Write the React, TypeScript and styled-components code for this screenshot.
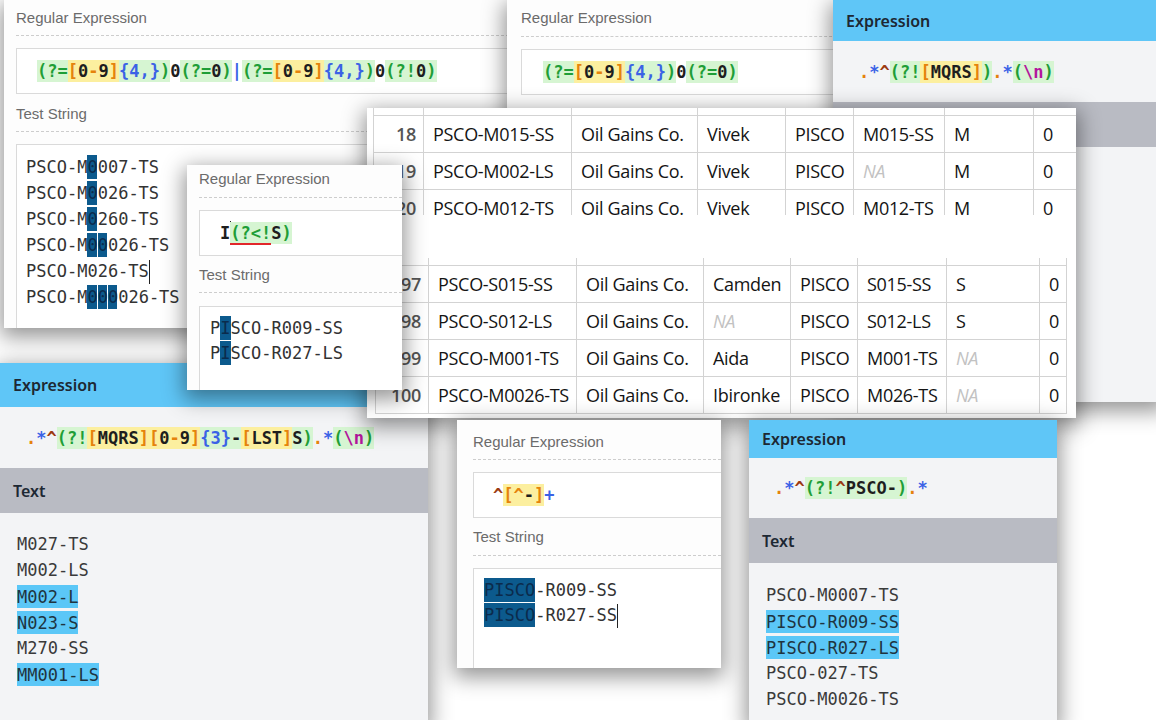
import React from 'react'
import styled, {createGlobalStyle} from 'styled-components'

const MONO = `"DejaVu Sans Mono", "Liberation Mono", monospace`

const GlobalStyle = createGlobalStyle`
  html, body {
    margin: 0;
    padding: 0;
    background: #fff;
  }
`

const Desk = styled.main`
  position: relative;
  width: 1156px;
  height: 720px;
  overflow: hidden;
  background: #fff;
`

// every screenshot is a cropped window lying on the desk
const Shot = styled.section<{ $x: number, $y: number, $w: number, $h: number, $z: number }>`
  position: absolute;
  left: ${p => p.$x}px;
  top: ${p => p.$y}px;
  width: ${p => p.$w}px;
  height: ${p => p.$h}px;
  z-index: ${p => p.$z};
  box-sizing: border-box;
  overflow: hidden;
  box-shadow: 0 6px 20px 3px rgba(0, 0, 0, .42);
`

/* ---------- regex tokens ---------- */

type Kind = 'grp' | 'br' | 'q' | 'dot' | 'caret' | 'esc' | 'lit'

const tokenColor: Record<Kind, string> = {
  grp: '#1f9e37',
  br: '#e5830c',
  q: '#3a62e6',
  dot: '#e5830c',
  caret: '#9c3b12',
  esc: '#b3179c',
  lit: '#1e1e1e',
}

const Tk = styled.span<{ $k: Kind }>`
  color: ${p => tokenColor[p.$k]};
`

const GroupBg = styled.span`
  background: #d6f5d2;
  padding: 1px 0;
`

const ClassBg = styled.span`
  background: #fcef9f;
  padding: 1px 0;
`

const Warn = styled.span`
  border-bottom: 2px solid #e2262a;
`

const Cursor = styled.span`
  display: inline-block;
  width: 1px;
  height: 24px;
  margin-right: -1px;
  background: #222;
  vertical-align: middle;
`

const Grp = ({open, children}: { open: React.ReactNode, children?: React.ReactNode }) => (
  <GroupBg><Tk $k="grp">{open}</Tk>{children}<Tk $k="grp">)</Tk></GroupBg>
)

const Cls = ({children}: { children?: React.ReactNode }) => (
  <ClassBg><Tk $k="br">[</Tk>{children}<Tk $k="br">]</Tk></ClassBg>
)

const Digits = () => <Cls>0<Tk $k="br">-</Tk>9</Cls>
const DotStar = () => <><Tk $k="dot">.</Tk><Tk $k="q">*</Tk></>

/* ---------- regex tester windows ---------- */

const Tester = styled(Shot)<{ $pad: number }>`
  background: #fdfdfd;
  padding-left: ${p => p.$pad}px;
  display: flex;
  flex-direction: column;
`

const FieldLabel = styled.div<{ $pt: number, $h: number }>`
  flex: none;
  box-sizing: border-box;
  height: ${p => p.$h}px;
  padding-top: ${p => p.$pt}px;
  font: 15px/20px "Liberation Sans", Arial, sans-serif;
  color: #6b6b6b;
  border-bottom: 1px dashed #cdcdcd;
`

const RegexBox = styled.div<{ $mt: number, $pl: number }>`
  flex: none;
  box-sizing: border-box;
  height: 46px;
  margin-top: ${p => p.$mt}px;
  margin-right: -4px;
  padding-left: ${p => p.$pl}px;
  display: flex;
  align-items: center;
  border: 1px solid #dadada;
  background: #fff;
  font: bold 17px ${MONO};
  color: #1e1e1e;
  white-space: pre;
`

const TestBox = styled.div<{ $mt: number, $pt: number, $pl: number, $lh: number }>`
  flex: 1;
  margin: ${p => p.$mt}px -4px -4px 0;
  padding: ${p => p.$pt}px 0 0 ${p => p.$pl}px;
  border: 1px solid #dadada;
  background: #fff;
  font: 17px/${p => p.$lh}px ${MONO};
  color: #333;
  white-space: pre;
`

const Sel = styled.span<{ $gap?: boolean }>`
  background: linear-gradient(to right, #0c5a8d calc(100% - ${p => p.$gap ? 1 : 0}px), transparent 0);
  color: #0b2b4c;
  padding: 2px 0;
`

/* ---------- expression windows ---------- */

const ExprShot = styled(Shot)`
  background: #f3f4f6;
  display: flex;
  flex-direction: column;
`

const Bar = styled.header<{ $tone: 'blue' | 'gray', $h: number }>`
  flex: none;
  height: ${p => p.$h}px;
  padding-left: 13px;
  display: flex;
  align-items: center;
  background: ${p => p.$tone === 'blue' ? '#5fc6f7' : '#b9bbc3'};
  font: 600 16px "Noto Sans", "Open Sans", sans-serif;
  color: #1d2833;
`

const ExprLine = styled.div<{ $h: number, $pl: number }>`
  flex: none;
  height: ${p => p.$h}px;
  padding-left: ${p => p.$pl}px;
  display: flex;
  align-items: center;
  font: bold 17px ${MONO};
  color: #1e1e1e;
  white-space: pre;
`

const TextBody = styled.div<{ $pt: number }>`
  padding: ${p => p.$pt}px 0 0 17px;
  font: 17px/26px ${MONO};
  color: #3a3a3a;
  white-space: pre;
`

const Hit = styled.span`
  background: #5bc7f7;
  color: #1f3440;
  padding: 1.5px 0;
`

/* ---------- spreadsheet window ---------- */

const Sheet = styled(Shot)`
  background: #fff;
`

const Clip = styled.div<{ $h: number, $ml: number, $mt: number }>`
  height: ${p => p.$h}px;
  margin: ${p => p.$mt}px 0 0 ${p => p.$ml}px;
  overflow: hidden;
`

const Grid = styled.table<{ $w: number }>`
  width: ${p => p.$w}px;
  margin-top: -30px;
  border-collapse: collapse;
  table-layout: fixed;
  font: 18px "Open Sans", "Noto Sans", sans-serif;
  letter-spacing: -0.3px;
  color: #141414;
`

const Col = styled.col<{ $w: number }>`
  width: ${p => p.$w}px;
`

const Cell = styled.td<{ $kind: 'num' | 'na' | 'text' }>`
  height: 37px;
  box-sizing: border-box;
  padding: 0 ${p => p.$kind === 'num' ? 7 : 0}px 0 ${p => p.$kind === 'num' ? 0 : 9}px;
  border: 1px solid #d3d3d3;
  white-space: nowrap;
  overflow: hidden;
  text-align: ${p => p.$kind === 'num' ? 'right' : 'left'};
  color: ${p => p.$kind === 'num' ? '#555' : p.$kind === 'na' ? '#c2c2c2' : '#141414'};
  font-weight: ${p => p.$kind === 'num' ? 600 : 400};
  font-style: ${p => p.$kind === 'na' ? 'italic' : 'normal'};
`

type Row = string[]

// the first row of each block lies above the crop; only its grid lines show
const topRows: Row[] = [
  ['', '', '', '', '', '', '', ''],
  ['18', 'PSCO-M015-SS', 'Oil Gains Co.', 'Vivek', 'PISCO', 'M015-SS', 'M', '0'],
  ['19', 'PSCO-M002-LS', 'Oil Gains Co.', 'Vivek', 'PISCO', 'NA', 'M', '0'],
  ['20', 'PSCO-M012-TS', 'Oil Gains Co.', 'Vivek', 'PISCO', 'M012-TS', 'M', '0'],
]

const bottomRows: Row[] = [
  ['', '', '', '', '', '', '', ''],
  ['97', 'PSCO-S015-SS', 'Oil Gains Co.', 'Camden', 'PISCO', 'S015-SS', 'S', '0'],
  ['98', 'PSCO-S012-LS', 'Oil Gains Co.', 'NA', 'PISCO', 'S012-LS', 'S', '0'],
  ['99', 'PSCO-M001-TS', 'Oil Gains Co.', 'Aida', 'PISCO', 'M001-TS', 'NA', '0'],
  ['100', 'PSCO-M0026-TS', 'Oil Gains Co.', 'Ibironke', 'PISCO', 'M026-TS', 'NA', '0'],
]

const DataGrid = ({rows, cols}: { rows: Row[], cols: number[] }) => (
  <Grid $w={cols.reduce((a, b) => a + b, 0)}>
    <colgroup>
      {cols.map((w, i) => <Col key={i} $w={w}/>)}
    </colgroup>
    <tbody>
    {rows.map((row, r) => (
      <tr key={r}>
        {row.map((v, i) => (
          <Cell key={i} $kind={i === 0 ? 'num' : v === 'NA' ? 'na' : 'text'}>{v}</Cell>
        ))}
      </tr>
    ))}
    </tbody>
  </Grid>
)

/* ---------- page ---------- */

export default function App() {
  return (
    <Desk>
      <GlobalStyle/>

      {/* top left tester */}
      <Tester $x={4} $y={0} $w={520} $h={328} $z={1} $pad={12}>
        <FieldLabel $pt={8} $h={36}>Regular Expression</FieldLabel>
        <RegexBox $mt={12} $pl={20}>
          <Grp open="(?="><Digits/><Tk $k="q">{'{4,}'}</Tk></Grp>0<Grp open="(?=">0</Grp>
          <Tk $k="q">|</Tk>
          <Grp open="(?="><Digits/><Tk $k="q">{'{4,}'}</Tk></Grp>0<Grp open="(?!">0</Grp>
        </RegexBox>
        <FieldLabel $pt={10} $h={38}>Test String</FieldLabel>
        <TestBox $mt={12} $pt={9} $pl={9} $lh={26}>
          <div>PSCO-M<Sel $gap>0</Sel>007-TS</div>
          <div>PSCO-M<Sel $gap>0</Sel>026-TS</div>
          <div>PSCO-M<Sel $gap>0</Sel>260-TS</div>
          <div>PSCO-M<Sel $gap>0</Sel><Sel $gap>0</Sel>026-TS</div>
          <div>PSCO-M026-TS<Cursor/></div>
          <div>PSCO-M<Sel $gap>0</Sel><Sel $gap>0</Sel><Sel $gap>0</Sel>026-TS</div>
        </TestBox>
      </Tester>

      {/* top middle tester, its test string lies under the sheet */}
      <Tester $x={507} $y={0} $w={340} $h={140} $z={2} $pad={14}>
        <FieldLabel $pt={8} $h={37}>Regular Expression</FieldLabel>
        <RegexBox $mt={12} $pl={21}>
          <Grp open="(?="><Digits/><Tk $k="q">{'{4,}'}</Tk></Grp>0<Grp open="(?=">0</Grp>
        </RegexBox>
      </Tester>

      {/* top right expression, its text header lies under the sheet */}
      <ExprShot $x={833} $y={0} $w={330} $h={402} $z={3}>
        <Bar $tone="blue" $h={41}>Expression</Bar>
        <ExprLine $h={61} $pl={26}>
          <DotStar/><Tk $k="caret">^</Tk><Grp open="(?!"><Cls>MQRS</Cls></Grp>
          <DotStar/><Grp open="("><Tk $k="esc">\n</Tk></Grp>
        </ExprLine>
        <Bar $tone="gray" $h={45}/>
      </ExprShot>

      {/* bottom left expression */}
      <ExprShot $x={0} $y={363} $w={428} $h={362} $z={4}>
        <Bar $tone="blue" $h={44}>Expression</Bar>
        <ExprLine $h={61} $pl={26}>
          <DotStar/><Tk $k="caret">^</Tk>
          <Grp open="(?!"><Cls>MQRS</Cls><Digits/><Tk $k="q">{'{3}'}</Tk>-<Cls>LST</Cls>S</Grp>
          <DotStar/><Grp open="("><Tk $k="esc">\n</Tk></Grp>
        </ExprLine>
        <Bar $tone="gray" $h={45}>Text</Bar>
        <TextBody $pt={18}>
          <div>M027-TS</div>
          <div>M002-LS</div>
          <div><Hit>M002-L</Hit></div>
          <div><Hit>N023-S</Hit></div>
          <div>M270-SS</div>
          <div><Hit>MM001-LS</Hit></div>
        </TextBody>
      </ExprShot>

      {/* spreadsheet */}
      <Sheet $x={367} $y={108} $w={709} $h={310} $z={5}>
        <Clip $h={107} $ml={6} $mt={0}>
          <DataGrid rows={topRows} cols={[50, 148, 126, 88, 68, 91, 89, 60]}/>
        </Clip>
        <Clip $h={156} $ml={8} $mt={43}>
          <DataGrid rows={bottomRows} cols={[53, 148, 127, 87, 67, 89, 93, 27]}/>
        </Clip>
      </Sheet>

      {/* middle popup tester */}
      <Tester $x={187} $y={165} $w={215} $h={225} $z={6} $pad={12}>
        <FieldLabel $pt={4} $h={33}>Regular Expression</FieldLabel>
        <RegexBox $mt={12} $pl={20}>
          I<Cursor/><GroupBg><Warn><Tk $k="grp">(?&lt;!</Tk></Warn>S<Tk $k="grp">)</Tk></GroupBg>
        </RegexBox>
        <FieldLabel $pt={9} $h={37}>Test String</FieldLabel>
        <TestBox $mt={13} $pt={9} $pl={10} $lh={25}>
          <div>P<Sel>I</Sel>SCO-R009-SS</div>
          <div>P<Sel>I</Sel>SCO-R027-LS</div>
        </TestBox>
      </Tester>

      {/* bottom middle tester */}
      <Tester $x={457} $y={420} $w={264} $h={248} $z={6} $pad={16}>
        <FieldLabel $pt={12} $h={40}>Regular Expression</FieldLabel>
        <RegexBox $mt={12} $pl={19}>
          <Tk $k="caret">^</Tk><Cls><Tk $k="br">^</Tk>-</Cls><Tk $k="q">+</Tk>
        </RegexBox>
        <FieldLabel $pt={9} $h={38}>Test String</FieldLabel>
        <TestBox $mt={12} $pt={9} $pl={10} $lh={25}>
          <div><Sel>PISCO</Sel>-R009-SS</div>
          <div><Sel>PISCO</Sel>-R027-SS<Cursor/></div>
        </TestBox>
      </Tester>

      {/* bottom right expression */}
      <ExprShot $x={749} $y={420} $w={308} $h={304} $z={6}>
        <Bar $tone="blue" $h={38}>Expression</Bar>
        <ExprLine $h={60} $pl={25}>
          <DotStar/><Tk $k="caret">^</Tk><Grp open="(?!"><Tk $k="caret">^</Tk>PSCO-</Grp><DotStar/>
        </ExprLine>
        <Bar $tone="gray" $h={45}>Text</Bar>
        <TextBody $pt={19}>
          <div>PSCO-M0007-TS</div>
          <div><Hit>PISCO-R009-SS</Hit></div>
          <div><Hit>PISCO-R027-LS</Hit></div>
          <div>PSCO-027-TS</div>
          <div>PSCO-M0026-TS</div>
        </TextBody>
      </ExprShot>
    </Desk>
  )
}
